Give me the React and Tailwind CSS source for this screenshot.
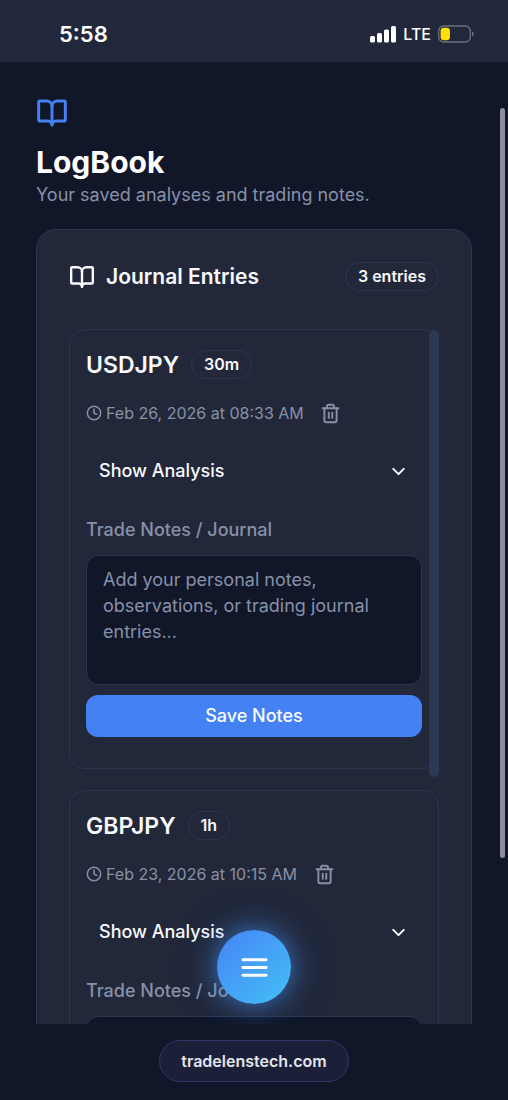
import { BookOpen, ChevronDown, Clock } from "lucide-react";

const entries = [
  { id: "usdjpy", pair: "USDJPY", timeframe: "30m", date: "Feb 26, 2026 at 08:33 AM" },
  { id: "gbpjpy", pair: "GBPJPY", timeframe: "1h", date: "Feb 23, 2026 at 10:15 AM" },
];

function StatusBar() {
  return (
    <header className="flex h-[62px] shrink-0 items-center justify-between bg-[#22283b] pt-1.5 pr-[34px] pb-px pl-[59px] text-white">
      <span className="text-[22px] leading-7 font-semibold">5:58</span>
      <div className="flex items-center gap-[7px]">
        <svg className="h-[18px] w-[26px]" viewBox="0 0 26 18" fill="currentColor" aria-hidden="true">
          <rect x="0" y="11" width="5" height="6.5" rx="1.6" />
          <rect x="7" y="8" width="5" height="9.5" rx="1.6" />
          <rect x="14" y="4.5" width="5" height="13" rx="1.6" />
          <rect x="21" y="1" width="5" height="16.5" rx="1.6" />
        </svg>
        <span className="text-base leading-6 font-medium">LTE</span>
        <svg className="h-[18px] w-9" viewBox="0 0 36 18" aria-hidden="true">
          <rect x="0.7" y="1" width="31.6" height="16" rx="5" fill="none" stroke="#6d7282" strokeWidth="1.3" />
          <path d="M34 6.5c1.2.4 1.8 1.300 1.800 2.500s-.6 2.100-1.800 2.500z" fill="#6d7282" />
          <rect x="2.600" y="2.800" width="9.400" height="12.400" rx="3.400" fill="#fddf0b" />
        </svg>
      </div>
    </header>
  );
}

function Badge({ children }) {
  return (
    <span className="flex h-[29px] items-center rounded-full border border-[#2b3753] px-3 pb-px text-base font-semibold text-[#f5f7fa]">
      {children}
    </span>
  );
}

function TrashIcon() {
  return (
    <svg
      className="size-[21px]"
      viewBox="0 0 24 24"
      fill="none"
      stroke="currentColor"
      strokeWidth="2.2"
      strokeLinecap="round"
      strokeLinejoin="round"
      aria-hidden="true"
    >
      <path d="M3 6h18" />
      <path d="M19 6v14c0 1-1 2-2 2H7c-1 0-2-1-2-2V6" />
      <path d="M8 6V4c0-1 1-2 2-2h4c1 0 2 1 2 2v2" />
      <path d="M10 11v6" />
      <path d="M14 11v6" />
    </svg>
  );
}

function Entry({ entry }) {
  const notesId = `notes-${entry.id}`;
  return (
    <article className="flex flex-col rounded-2xl border border-[#2b3753] px-4 pt-5 pb-[31px]">
      <div className="flex items-center gap-3">
        <h3 className="text-[23px] leading-7 font-semibold text-[#f8fafc]">{entry.pair}</h3>
        <Badge>{entry.timeframe}</Badge>
      </div>
      <div className="mt-[13px] flex items-center gap-1.5 text-[#8791a8]">
        <div className="flex items-center gap-1">
          <Clock className="size-4" strokeWidth={2.2} aria-hidden="true" />
          <time className="text-base">{entry.date}</time>
        </div>
        <button type="button" aria-label="Delete entry" className="flex size-[42px] items-center justify-center rounded-xl">
          <TrashIcon />
        </button>
      </div>
      <button
        type="button"
        className="mt-4 flex h-[42px] items-center justify-between rounded-xl px-[13px] text-lg font-medium text-[#f8fafc]"
      >
        Show Analysis
        <ChevronDown className="size-[21px]" strokeWidth={2.3} aria-hidden="true" />
      </button>
      <label htmlFor={notesId} className="mt-[25px] text-lg leading-[26px] font-medium text-[#8791a8]">
        Trade Notes / Journal
      </label>
      <textarea
        id={notesId}
        placeholder="Add your personal notes, observations, or trading journal entries..."
        className="mt-3 h-[130px] resize-none rounded-xl border border-[#2b3753] bg-[#111629] px-4 py-[11px] text-lg leading-[26px] text-[#f8fafc] placeholder:text-[#8791a8]"
      />
      <button type="button" className="mt-2.5 h-[42px] rounded-xl bg-[#4482f4] text-lg font-medium text-[#f8fafc]">
        Save Notes
      </button>
    </article>
  );
}

export default function App() {
  return (
    <div className="flex h-screen flex-col bg-[#111629] font-['Inter',sans-serif]">
      <StatusBar />
      <div className="relative flex min-h-0 flex-1 flex-col overflow-hidden">
        <main className="min-h-0 flex-1 overflow-hidden px-9 pt-[35px]">
          <BookOpen className="size-8 text-[#4482f4]" strokeWidth={2.2} aria-hidden="true" />
          <h1 className="mt-3.5 text-[30px] leading-[38px] font-bold text-white">LogBook</h1>
          <p className="text-lg leading-7 text-[#8791a8]">Your saved analyses and trading notes.</p>
          <section className="mt-5 rounded-[20px] border border-[#2b3753] bg-[#22273a] p-8">
            <div className="flex items-center justify-between">
              <h2 className="flex items-center gap-[11px] text-[21px] leading-7 font-semibold text-[#f8fafc]">
                <BookOpen className="size-[26px]" strokeWidth={2.2} aria-hidden="true" />
                Journal Entries
              </h2>
              <Badge>3 entries</Badge>
            </div>
            <div className="relative mt-[38px] flex flex-col gap-[21px]">
              {entries.map((entry) => (
                <Entry key={entry.id} entry={entry} />
              ))}
              <div className="absolute top-px right-0 h-[447px] w-2.5 rounded-full bg-[#2d3854]" />
            </div>
          </section>
        </main>
        <div className="absolute top-[46px] right-[3px] h-[750px] w-[5px] rounded-full bg-[#8b8d99]" />
        <div className="absolute inset-x-0 bottom-5 flex justify-center">
          <button
            type="button"
            aria-label="Open menu"
            className="flex size-[74px] items-center justify-center rounded-full bg-linear-135 from-[#4683f6] to-[#44bff5] text-white shadow-[0_0_26px_rgba(68,140,244,0.7),0_0_52px_rgba(56,189,248,0.15)]"
          >
            <svg
              className="size-[31px]"
              viewBox="0 0 24 24"
              fill="none"
              stroke="currentColor"
              strokeWidth="2.2"
              strokeLinecap="round"
              aria-hidden="true"
            >
              <path d="M3 6h18M3 12h18M3 18h18" />
            </svg>
          </button>
        </div>
      </div>
      <footer className="flex h-[76px] shrink-0 items-start justify-center pt-4">
        <a
          href="#home"
          className="flex h-[42px] items-center rounded-full border border-[#2b3868] bg-[#1b1f37] px-[21px] text-base font-semibold text-[#e4e6ee]"
        >
          tradelenstech.com
        </a>
      </footer>
    </div>
  );
}
